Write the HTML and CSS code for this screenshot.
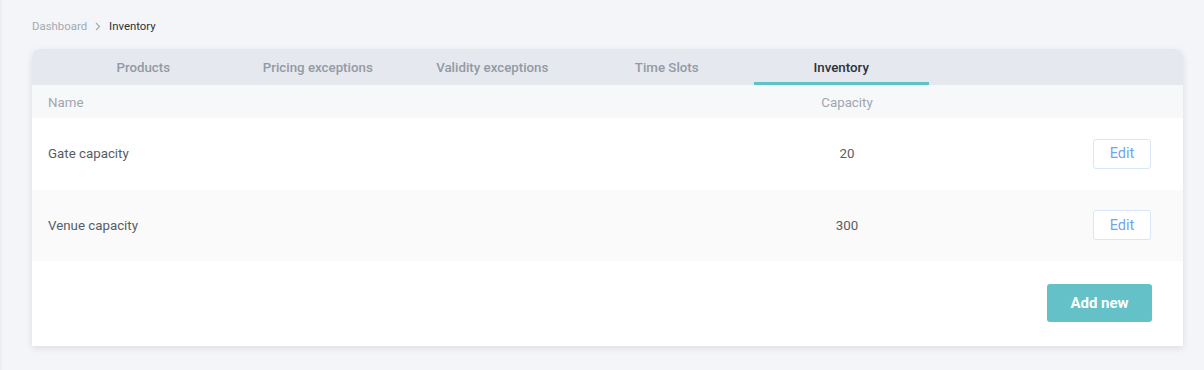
FILE: index.html
```html
<!DOCTYPE html>
<html>
<head>
<meta charset="utf-8">
<link rel="stylesheet" href="styles.css">
</head>
<body>
<div class="page">
  <nav class="crumbs">
    <span class="crumb-link">Dashboard</span>
    <svg class="crumb-sep" width="6" height="9" viewBox="0 0 6 9"><path d="M1 1l3.5 3.5L1 8" fill="none" stroke="#a6abb2" stroke-width="1.2"/></svg>
    <span class="crumb-current">Inventory</span>
  </nav>
  <section class="card">
    <div class="tabs">
      <div class="tab">Products</div>
      <div class="tab">Pricing exceptions</div>
      <div class="tab">Validity exceptions</div>
      <div class="tab">Time Slots</div>
      <div class="tab active">Inventory</div>
    </div>
    <div class="row head">
      <div class="c-name">Name</div>
      <div class="c-cap">Capacity</div>
      <div></div>
    </div>
    <div class="row body">
      <div class="c-name">Gate capacity</div>
      <div class="c-cap">20</div>
      <div class="c-act"><button class="btn-edit">Edit</button></div>
    </div>
    <div class="row body alt">
      <div class="c-name">Venue capacity</div>
      <div class="c-cap">300</div>
      <div class="c-act"><button class="btn-edit">Edit</button></div>
    </div>
    <div class="footer">
      <button class="btn-add">Add new</button>
    </div>
  </section>
</div>
</body>
</html>
```

FILE: styles.css
```css
* { box-sizing: border-box; }
html, body { margin: 0; padding: 0; }
body {
  width: 1204px;
  height: 370px;
  background: #f4f5f8;
  font-family: Roboto, "Liberation Sans", sans-serif;
  border-left: 2px solid #eceef2;
  overflow: hidden;
}
.page {
  padding: 19px 21px 0 30px;
}
.crumbs {
  display: flex;
  align-items: center;
  gap: 8px;
  height: 14px;
  font-size: 11.4px;
  line-height: 14px;
}
.crumb-link { color: #a4a9b0; }
.crumb-current { color: #2b313a; }
.crumb-sep { margin-top: 1px; }
.card {
  margin-top: 16px;
  width: 1151px;
  background: #fff;
  border-radius: 8px 8px 0 0;
  box-shadow: 0 2px 6px rgba(40, 50, 70, 0.12);
  overflow: hidden;
}
.tabs {
  display: flex;
  height: 36px;
  padding-left: 24px;
  background: #e5e8ef;
}
.tab {
  width: 174.5px;
  display: flex;
  align-items: center;
  justify-content: center;
  font-size: 13.3px;
  font-weight: 500;
  color: #939aa3;
  border-bottom: 3px solid transparent;
  padding-top: 3px;
}
.tab.active {
  color: #2b323c;
  border-bottom-color: #5ec3c8;
}
.row {
  display: grid;
  grid-template-columns: 740px 118px 1fr;
  align-items: center;
  padding: 0 32px 0 16px;
  font-size: 13.3px;
}
.row.head {
  height: 33px;
  background: #f7f8fa;
  color: #a0a6ad;
  padding-top: 2px;
}
.row.body {
  height: 71.5px;
  color: #575d66;
  background: #fff;
}
.row.body.alt { background: #fafafa; }
.c-cap { text-align: center; }
.c-act { display: flex; justify-content: flex-end; }
.btn-edit {
  width: 58px;
  height: 30px;
  border: 1px solid #d9e5f8;
  border-radius: 3px;
  background: #fff;
  color: #6fa6ee;
  font-family: inherit;
  font-size: 14.5px;
  padding: 0;
}
.footer {
  display: flex;
  justify-content: flex-end;
  padding: 23px 31px 24px 0;
}
.btn-add {
  width: 105px;
  height: 38px;
  border: none;
  border-radius: 3px;
  background: #63c1c7;
  color: #fff;
  font-family: inherit;
  font-size: 15px;
  font-weight: 700;
  padding: 0;
}
```
